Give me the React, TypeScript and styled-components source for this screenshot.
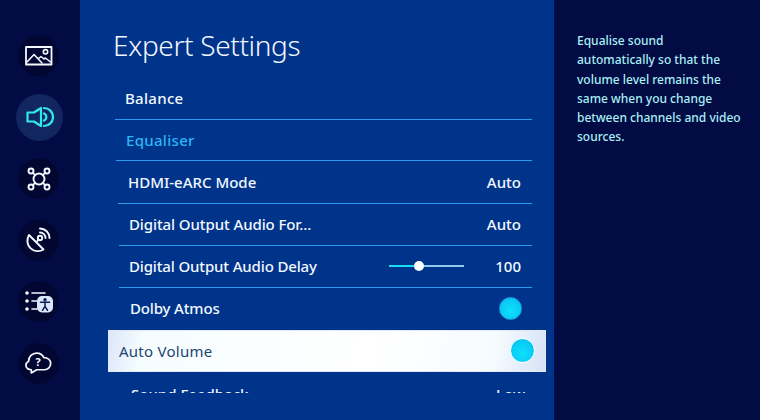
import React from "react";
import styled, { createGlobalStyle } from "styled-components";

const Global = createGlobalStyle`
  html, body { margin: 0; padding: 0; background: #020b44; }
  #root { width: 760px; height: 420px; overflow: hidden; }
`;
const Page = styled.div`
  width: 760px; height: 420px; display: flex; overflow: hidden;
  font-family: "Noto Sans", "Open Sans", sans-serif; background: #020b44;
`;
const Rail = styled.nav`
  width: 80px; flex: none; background: #020b44; box-sizing: border-box;
  padding-top: 35px; padding-left: 18px; display: flex; flex-direction: column; gap: 20.6px;
`;
const IconDisc = styled.div<{ $active?: boolean }>`
  width: 41px; height: 41px; border-radius: 50%; flex: none;
  background: ${p => (p.$active ? "#12265f" : "#020731")};
  display: flex; align-items: center; justify-content: center;
  ${p => p.$active ? "width:47px;height:47px;margin:-3px 0 -3px -2px;" : ""}
`;
const Main = styled.main`
  width: 474px; flex: none; background: #00338a; box-sizing: border-box; padding-top: 27px;
  overflow: hidden; position: relative;
`;
const Title = styled.h1`
  margin: 0 0 15px 33px; font-size: 28px; line-height: 36px; font-weight: 300; color: #f1f8ff; letter-spacing: -0.35px;
`;
const Row = styled.div<{ $indent: number; $h?: number; $last?: boolean }>`
  height: ${p => p.$h ?? 42}px; margin-left: ${p => p.$indent}px; width: ${p => 452 - p.$indent}px;
  box-sizing: border-box; border-bottom: 1px solid ${p => (p.$last ? "transparent" : "#2b9bef")}; display: flex; align-items: center;
  padding: 0 11px 1px 10px;
`;
const Label = styled.span<{ $accent?: boolean; $track?: number }>`
  flex: 1; font-size: 15px; font-weight: 500; color: ${p => (p.$accent ? "#2cb6f4" : "#f2f8ff")}; white-space: nowrap;
  letter-spacing: ${p => p.$track ?? 0}px;
`;
const Value = styled.span`
  font-size: 15px; font-weight: 500; color: #f2f8ff;
`;
const Knob = styled.span`
  width: 23px; height: 23px; border-radius: 50%; box-sizing: border-box; flex: none; margin-right: -1px;
  background: radial-gradient(circle at 50% 62%, #0fe0fc, #05bdf0);
  border: 1px solid #1b9fe6;
`;
const Slider = styled.div`
  position: relative; width: 75px; height: 2px; margin-right: 31px;
  background: linear-gradient(to right, #1bdcf2 40%, #8fc9ee 40%);
`;
const Thumb = styled.span`
  position: absolute; left: 25px; top: -4px; width: 10px; height: 10px; border-radius: 50%; background: #fff;
`;
const Focus = styled.div`
  height: 42px; margin-left: 28px; width: 438px; box-sizing: border-box;
  display: flex; align-items: center; padding: 0 11px 1px 10px;
  background: linear-gradient(100deg, #dbe6fa 0%, #f6fdff 8%, #ffffff 60%, #f6fbff 88%, #d6e2f6 100%);
  border: 1px solid #dfe9fa;
`;
const FocusLabel = styled.span`
  flex: 1; font-size: 15px; font-weight: 400; color: #23456f; letter-spacing: .25px;
`;
const FocusKnob = styled(Knob)`
  width: 25px; height: 25px; border: 1px solid #fff;
`;
const Peek = styled.div`
  display: flex; margin: 12px 0 0 51px; width: 394px; height: 9px; overflow: hidden; justify-content: space-between;
  font-size: 15px; line-height: 20px; font-weight: 500; color: #f2f8ff;
`;
const Help = styled.aside`
  flex: 1; box-sizing: border-box; padding: 31px 18px 0 23px; color: #a9eff4;
  font-size: 12px; line-height: 19.3px; font-weight: 500;
`;

const w = { fill: "none", stroke: "#f4f8ff", strokeWidth: 1.6, strokeLinecap: "round" as const, strokeLinejoin: "round" as const };

const Picture = () => (
  <svg width="28" height="20" viewBox="0 0 28 20" {...w}>
    <rect x="1" y="1" width="25.5" height="17.5" strokeWidth="1.8" />
    <path d="M2 16l7-7.5 8 8.5M13.500 12.500l2.500-2 3 2.500 1.500-1 5 4" />
    <circle cx="20.500" cy="5.800" r="2.200" />
  </svg>
);
const Speaker = () => (
  <svg width="28" height="22" viewBox="0 0 28 22" fill="none" stroke="#2ee9ee" strokeWidth="2.200" strokeLinejoin="round" strokeLinecap="round">
    <path d="M1.500 6.500h6.500L15 2v18l-7-4.500H1.500z" />
    <path d="M18 7.500a3.800 3.800 0 0 1 0 7" />
    <path d="M18 2a9 9 0 0 1 0 18" />
  </svg>
);
const Network = () => (
  <svg width="28" height="28" viewBox="0 0 28 28" {...w} strokeWidth={1.9}>
    <circle cx="14" cy="14" r="5.500" />
    <circle cx="6" cy="6" r="2.500" /><circle cx="22" cy="6" r="2.500" />
    <circle cx="6" cy="22" r="2.500" /><circle cx="22" cy="22" r="2.500" />
    <path d="M7.800 7.800l2.400 2.400M20.200 7.800l-2.400 2.400M7.800 20.200l2.400-2.400M20.200 20.200l-2.400-2.400" />
  </svg>
);
const Dish = () => (
  <svg width="28" height="28" viewBox="0 0 28 28" {...w} strokeWidth={1.9}>
    <path d="M4 9A10.500 10.500 0 0 0 18.500 23.500z" />
    <circle cx="15" cy="12" r="2.200" />
    <path d="M12 15.500l1.500-2" />
    <path d="M15 6.500a5.500 5.500 0 0 1 5.500 5.500M15 2.500a9.500 9.500 0 0 1 9.500 9.500" />
  </svg>
);
const Access = () => (
  <svg width="28" height="22" viewBox="0 0 28 22">
    <g fill="#f4f8ff"><circle cx="2" cy="2" r="1.800" /><circle cx="2" cy="10" r="1.800" /><circle cx="2" cy="18" r="1.800" /></g>
    <path d="M7 2h13M7 10h5M7 18h5" stroke="#f4f8ff" strokeWidth="1.600" strokeLinecap="round" />
    <rect x="12" y="5" width="16" height="16.500" rx="5" fill="#dbe6fb" />
    <circle cx="20" cy="8.700" r="1.700" fill="#0a1a50" />
    <path d="M15.500 11.300h9M20 11.300v4M20 15.300l-2.500 4M20 15.300l2.500 4" stroke="#0a1a50" strokeWidth="1.500" strokeLinecap="round" />
  </svg>
);
const CloudHelp = () => (
  <svg width="27" height="24" viewBox="0 0 30 26" {...w} strokeWidth={1.900}>
    <path d="M7 20.500c-3.500 0-6-2-6-5 0-2.300 1.300-3.500 3-4.500 0-5 4-9 9-9 3.500 0 6.500 2 8 5 4 0 7.500 2.500 7.500 6.500 0 4-3 7-7 7H13l-6 3.500z" />
    <text x="14.500" y="16.500" fontSize="12" fontWeight="700" fill="#f4f8ff" stroke="none" fontFamily="Noto Sans, sans-serif" textAnchor="middle">?</text>
  </svg>
);

export default function App() {
  return (
    <Page>
      <Global />
      <Rail>
        <IconDisc><Picture /></IconDisc>
        <IconDisc $active><Speaker /></IconDisc>
        <IconDisc><Network /></IconDisc>
        <IconDisc><Dish /></IconDisc>
        <IconDisc><Access /></IconDisc>
        <IconDisc><CloudHelp /></IconDisc>
      </Rail>
      <Main>
        <Title>Expert Settings</Title>
        <Row $indent={35}><Label $track={0.3}>Balance</Label></Row>
        <Row $indent={36} $h={41}><Label $accent $track={0.3}>Equaliser</Label></Row>
        <Row $indent={38} $h={43}><Label>HDMI-eARC Mode</Label><Value>Auto</Value></Row>
        <Row $indent={39}><Label $track={-0.1}>Digital Output Audio For...</Label><Value>Auto</Value></Row>
        <Row $indent={39}><Label $track={-0.15}>Digital Output Audio Delay</Label><Slider><Thumb /></Slider><Value>100</Value></Row>
        <Row $indent={40} $last><Label $track={-0.15}>Dolby Atmos</Label><Knob /></Row>
        <Focus><FocusLabel>Auto Volume</FocusLabel><FocusKnob /></Focus>
        <Peek><span>Sound Feedback</span><span>Low</span></Peek>
      </Main>
      <Help>Equalise sound automatically so that the volume level remains the same when you change between channels and video sources.</Help>
    </Page>
  );
}
